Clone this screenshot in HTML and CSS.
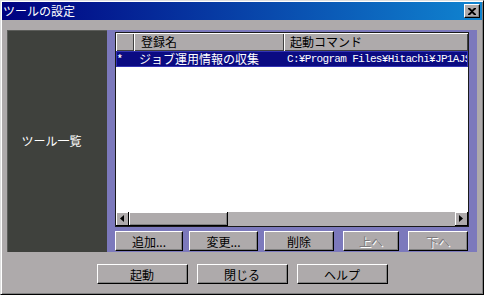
FILE: index.html
```html
<!DOCTYPE html>
<html lang="ja">
<head>
  <meta charset="UTF-8">
  <title>ツールの設定</title>
  <link rel="stylesheet" href="styles.css">
</head>
<body>
  <div class="window">
    <div class="titlebar">
      <span class="title">ツールの設定</span>
      <span class="close">
        <svg width="8" height="7" viewBox="0 0 8 7"><path d="M0 0h2l2 2 2-2h2v1L5 3.5 8 6v1H6L4 5 2 7H0V6l3-2.5L0 1z" fill="#000"/></svg>
      </span>
    </div>
    <div class="content">
      <div class="main">
        <div class="side">ツール一覧</div>
        <div class="panel">
          <div class="list">
            <div class="list-head">
              <div class="col col-mark"></div>
              <div class="col col-name">登録名</div>
              <div class="col col-cmd">起動コマンド</div>
            </div>
            <div class="list-body">
              <div class="row selected">
                <span class="cell cell-mark">*</span>
                <span class="cell cell-name">ジョブ運用情報の収集</span>
                <span class="cell cell-cmd">C:¥Program Files¥Hitachi¥JP1AJS</span>
              </div>
            </div>
            <div class="hscroll">
              <div class="sb-btn">
                <svg width="4" height="7" viewBox="0 0 4 7"><path d="M4 0v7L0 3.5z" fill="#000"/></svg>
              </div>
              <div class="sb-track"><div class="sb-thumb"></div></div>
              <div class="sb-btn">
                <svg width="4" height="7" viewBox="0 0 4 7"><path d="M0 0v7l4-3.5z" fill="#000"/></svg>
              </div>
            </div>
          </div>
          <div class="list-buttons">
            <button class="btn btn-add">追加...</button>
            <button class="btn btn-edit">変更...</button>
            <button class="btn btn-del">削除</button>
            <button class="btn btn-up" disabled>上へ</button>
            <button class="btn btn-down" disabled>下へ</button>
          </div>
        </div>
      </div>
      <div class="footer">
        <button class="btn btn-wide">起動</button>
        <button class="btn btn-wide">閉じる</button>
        <button class="btn btn-wide">ヘルプ</button>
      </div>
    </div>
  </div>
</body>
</html>
```

FILE: styles.css
```css
body {
  margin: 0;
  padding: 0;
  font-family: "Noto Sans CJK JP", "Liberation Sans", sans-serif;
  font-size: 12px;
  color: #000;
}
.window {
  width: 484px;
  height: 295px;
  box-sizing: border-box;
  background: #aeaaab;
  border: 1px solid;
  border-color: #dfdfdf #000 #000 #dfdfdf;
  box-shadow: inset 1px 1px #fff, inset -1px -1px #808080;
  padding: 1px;
}
.titlebar {
  height: 18px;
  display: flex;
  align-items: center;
  justify-content: space-between;
  background: linear-gradient(to right, #000080, #1084d0);
  color: #fff;
  padding: 0 2px 0 1px;
}
.title {
  line-height: 18px;
}
.close {
  width: 14px;
  height: 12px;
  display: flex;
  align-items: center;
  justify-content: center;
  background: #aeaaab;
  border: 1px solid;
  border-color: #fff #000 #000 #fff;
  box-shadow: inset -1px -1px #808080;
}
.content {
  padding: 10px 5px 0 5px;
}
.main {
  display: flex;
  height: 222px;
}
.side {
  width: 100px;
  flex-shrink: 0;
  box-sizing: border-box;
  background: #3f413d;
  border-top: 1px solid #5c5d5a;
  border-left: 1px solid #5c5d5a;
  color: #fff;
  display: flex;
  align-items: center;
  justify-content: center;
  padding-right: 12px;
  padding-bottom: 2px;
  white-space: nowrap;
}
.panel {
  flex: 1;
  min-width: 0;
  background: #7c79bc;
  padding: 2px 8px 1px 8px;
  display: flex;
  flex-direction: column;
  gap: 4px;
}
.list {
  height: 195px;
  box-sizing: border-box;
  border: 1px solid #1a1a1a;
  background: #fff;
  display: flex;
  flex-direction: column;
  overflow: hidden;
}
.list-head {
  display: flex;
  height: 18px;
  flex-shrink: 0;
}
.col {
  box-sizing: border-box;
  background: #aeaaab;
  box-shadow: inset 1px 1px #fff, inset -1px -1px #404040;
  line-height: 18px;
  white-space: nowrap;
}
.col-mark {
  width: 18px;
}
.col-name {
  width: 150px;
  padding-left: 7px;
}
.col-cmd {
  flex: 1;
  padding-left: 6px;
}
.list-body {
  flex: 1;
}
.row {
  display: flex;
  height: 16px;
  box-sizing: border-box;
  white-space: nowrap;
  overflow: hidden;
}
.row.selected {
  background: #0b0b82;
  border: 1px solid #3434b4;
  color: #fff;
}
.cell {
  line-height: 14px;
  flex-shrink: 0;
}
.cell-mark {
  width: 17px;
}
.cell-name {
  width: 150px;
  box-sizing: border-box;
  padding-left: 5px;
}
.cell-cmd {
  padding-left: 3px;
  font-family: "Liberation Mono", "Noto Sans CJK JP", monospace;
  font-size: 11px;
  letter-spacing: -0.68px;
}
.hscroll {
  display: flex;
  height: 14px;
  flex-shrink: 0;
  background: #b3b0b1;
}
.sb-btn {
  width: 13px;
  box-sizing: border-box;
  background: #aeaaab;
  border-right: 1px solid #000;
  border-bottom: 1px solid #000;
  box-shadow: inset 1px 1px #fff;
  display: flex;
  align-items: center;
  justify-content: center;
}
.sb-track {
  flex: 1;
  display: flex;
}
.sb-thumb {
  width: 99px;
  box-sizing: border-box;
  background: #aeaaab;
  border-right: 1px solid #000;
  border-bottom: 1px solid #000;
  box-shadow: inset 1px 1px #fff, inset -1px -1px #808080;
}
.list-buttons {
  display: flex;
  height: 20px;
}
.btn {
  height: 20px;
  box-sizing: border-box;
  background: #aeaaab;
  border: 1px solid;
  border-color: #fff #000 #000 #fff;
  box-shadow: inset -1px -1px #808080;
  font-family: "Noto Sans CJK JP", "Liberation Sans", sans-serif;
  font-size: 12px;
  color: #000;
  padding: 0;
  line-height: 17px;
}
.btn:disabled {
  color: #7e7b7e;
  text-shadow: 1px 1px #fff;
}
.btn-add {
  width: 68px;
}
.btn-edit {
  width: 69px;
  margin-left: 6px;
}
.btn-del {
  width: 70px;
  margin-left: 6px;
}
.btn-up {
  width: 56px;
  margin-left: 9px;
}
.btn-down {
  width: 60px;
  margin-left: 9px;
}
.footer {
  display: flex;
  justify-content: center;
  gap: 9px;
  margin-top: 12px;
}
.btn-wide {
  width: 91px;
}
```
